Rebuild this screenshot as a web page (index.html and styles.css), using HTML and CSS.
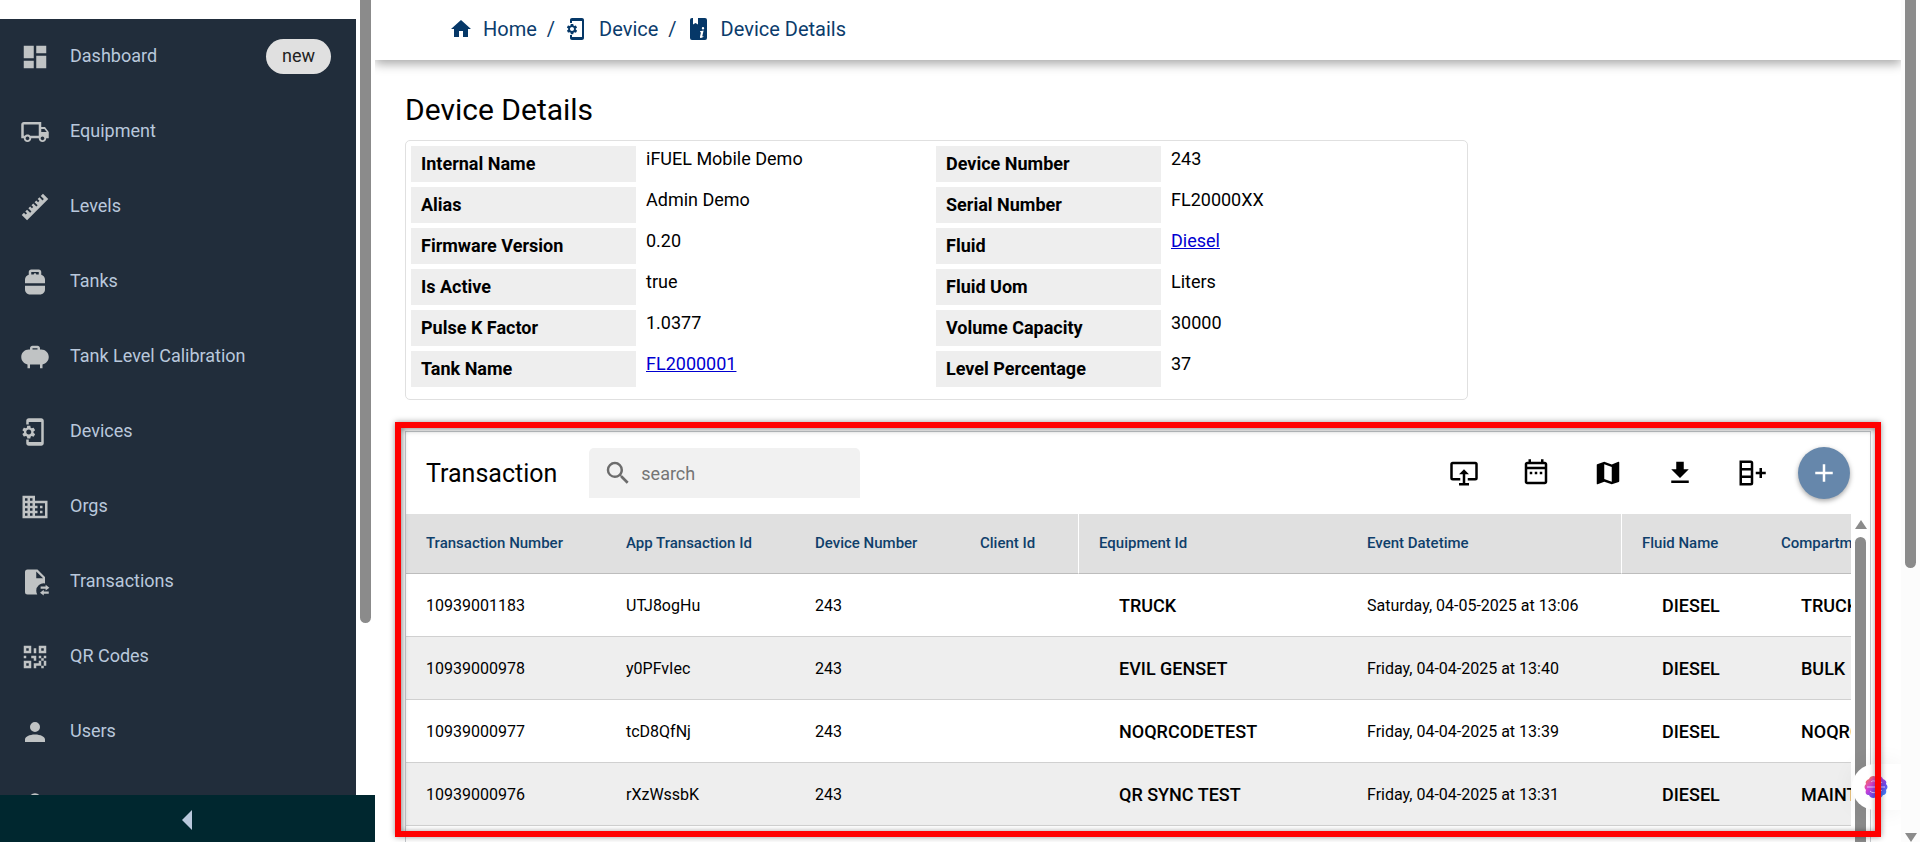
FILE: index.html
```html
<!DOCTYPE html>
<html lang="en">
<head>
  <meta charset="UTF-8">
  <meta name="viewport" content="width=device-width, initial-scale=1.0">
  <title>Device Details</title>
  <link rel="stylesheet" href="styles.css">
</head>
<body>
  <aside class="sidebar">
    <div class="sidebar-body">
      <nav class="menu">
        <a class="menu-item" href="#">
          <svg viewBox="0 0 24 24"><path d="M13,3V9H21V3M13,21H21V11H13M3,21H11V15H3M3,13H11V3H3V13Z"/></svg>
          <span class="menu-label">Dashboard</span>
          <span class="chip">new</span>
        </a>
        <a class="menu-item" href="#">
          <svg viewBox="0 0 24 24"><path d="M18 18.5C18.83 18.5 19.5 17.83 19.5 17C19.5 16.17 18.83 15.5 18 15.5C17.17 15.5 16.5 16.17 16.5 17C16.5 17.83 17.17 18.5 18 18.5M19.5 9.5H17V12H21.46L19.5 9.5M6 18.5C6.83 18.5 7.5 17.83 7.5 17C7.5 16.17 6.83 15.5 6 15.5C5.17 15.5 4.5 16.17 4.5 17C4.5 17.83 5.17 18.5 6 18.5M20 8L23 12V17H21C21 18.66 19.66 20 18 20C16.34 20 15 18.66 15 17H9C9 18.66 7.66 20 6 20C4.34 20 3 18.66 3 17H1V6C1 4.89 1.89 4 3 4H17V8H20M3 6V15H3.76C4.31 14.39 5.11 14 6 14C6.89 14 7.69 14.39 8.24 15H15V6H3Z"/></svg>
          <span class="menu-label">Equipment</span>
        </a>
        <a class="menu-item" href="#">
          <svg viewBox="0 0 24 24"><path d="M1.39,18.36L3.16,16.6L4.58,18L5.64,16.95L4.22,15.54L5.64,14.12L8.11,16.6L9.17,15.54L6.7,13.06L8.11,11.65L9.53,13.06L10.59,12L9.17,10.59L10.59,9.17L13.06,11.65L14.12,10.59L11.65,8.11L13.06,6.7L14.47,8.11L15.54,7.05L14.12,5.64L15.54,4.22L18,6.7L19.07,5.64L16.6,3.16L18.36,1.39L22.61,5.64L5.64,22.61L1.39,18.36Z"/></svg>
          <span class="menu-label">Levels</span>
        </a>
        <a class="menu-item" href="#">
          <svg viewBox="0 0 24 24"><path d="M4,15v3c0,2.21,1.79,4,4,4h8c2.21,0,4-1.79,4-4v-3H4z M20,13v-3c0-1.86-1.28-3.41-3-3.86V4c0-1.1-0.9-2-2-2H9C7.9,2,7,2.9,7,4v2.14c-1.72,0.45-3,2-3,3.86v3H20z M9,4h6v2h-2c0-.55-.45-1-1-1s-1 .45-1 1H9V4z"/></svg>
          <span class="menu-label">Tanks</span>
        </a>
        <a class="menu-item" href="#">
          <svg viewBox="0 0 24 24"><path d="M17,6h-1V5c0-1.1-0.9-2-2-2h-4C8.9,3,8,3.9,8,5v1H7c-3.31,0-6,2.69-6,6c0,2.97,2.16,5.43,5,5.91V21h2v-3h8v3h2v-3.09c2.84-0.48,5-2.94,5-5.91C23,8.69,20.31,6,17,6z M10,5h4v1h-4V5z"/></svg>
          <span class="menu-label">Tank Level Calibration</span>
        </a>
        <a class="menu-item" href="#">
          <svg viewBox="1 0 24 24"><path d="M11.8 12.5v-1l1.1-.8c.1-.1.1-.2.1-.3l-1-1.7c-.1-.1-.2-.2-.3-.1l-1.3.4c-.3-.2-.6-.4-.9-.5l-.2-1.3c0-.1-.1-.2-.3-.2H7c-.1 0-.2.1-.3.2l-.2 1.3c-.3.1-.6.3-.9.5l-1.3-.5c-.1 0-.2 0-.3.1l-1 1.7c-.1.2 0 .3.1.4l1.1.9v1l-1.1.8c-.1.1-.2.3-.1.4l1 1.7c.1.1.2.2.3.1l1.4-.4c.3.2.6.4.9.5l.2 1.3c-.1.1.1.2.2.2h2c.1 0 .2-.1.3-.2l.2-1.3c.3-.1.6-.3.9-.5l1.3.5c.1 0 .2 0 .3-.1l1-1.7c.1-.2 0-.3-.1-.4l-1.1-.9zM8 14c-1.1 0-2-.9-2-2s.9-2 2-2 2 .9 2 2-.9 2-2 2zM18 1H8c-1.1 0-2 .9-2 2v3h2V4h10v16H8v-2H6v3c0 1.1.9 2 2 2h10c1.1 0 2-.9 2-2V3c0-1.1-.9-2-2-2z"/></svg>
          <span class="menu-label">Devices</span>
        </a>
        <a class="menu-item" href="#">
          <svg viewBox="0 0 24 24"><path d="M18,15H16V17H18M18,11H16V13H18M20,19H12V17H14V15H12V13H14V11H12V9H20M10,7H8V5H10M10,11H8V9H10M10,15H8V13H10M10,19H8V17H10M6,7H4V5H6M6,11H4V9H6M6,15H4V13H6M6,19H4V17H6M12,7V3H2V21H22V7H12Z"/></svg>
          <span class="menu-label">Orgs</span>
        </a>
        <a class="menu-item" href="#">
          <svg viewBox="0 0 24 24"><path d="M14 2H6a2 2 0 0 0-2 2v16a2 2 0 0 0 2 2h7.8c-.5-.9-.8-1.9-.8-3a6 6 0 0 1 7-5.9V8l-6-6M13 9V3.5L18.5 9H13M20.5 14.2v1.4h-4v1.8h4v1.4l3-2.3zM19 18.2v1.4h4v1.8h-4v1.4l-3-2.3z"/></svg>
          <span class="menu-label">Transactions</span>
        </a>
        <a class="menu-item" href="#">
          <svg viewBox="0 0 24 24"><path d="M3,11H5V13H3V11M11,5H13V9H11V5M9,11H13V15H11V13H9V11M15,11H17V13H19V11H21V13H19V15H21V19H19V21H17V19H13V21H11V17H15V15H17V13H15V11M19,19V15H17V19H19M15,3H21V9H15V3M17,5V7H19V5H17M3,3H9V9H3V3M5,5V7H7V5H5M3,15H9V21H3V15M5,17V19H7V17H5Z"/></svg>
          <span class="menu-label">QR Codes</span>
        </a>
        <a class="menu-item" href="#">
          <svg viewBox="0 0 24 24"><path d="M12,4A4,4 0 0,1 16,8A4,4 0 0,1 12,12A4,4 0 0,1 8,8A4,4 0 0,1 12,4M12,14C16.42,14 20,15.79 20,18V20H4V18C4,15.79 7.58,14 12,14Z"/></svg>
          <span class="menu-label">Users</span>
        </a>
        <a class="menu-item" href="#" aria-label="Account">
          <svg viewBox="0 0 24 24"><circle cx="12" cy="6" r="5"/></svg>
        </a>
      </nav>
      <div class="scrollbar scrollbar-menu"><div class="thumb"></div></div>
    </div>
    <button class="collapse" aria-label="Collapse menu">
      <svg viewBox="0 0 10 20"><path d="M10 0V20L0 10z"/></svg>
    </button>
  </aside>

  <div class="page">
    <main class="main">
      <nav class="breadcrumb">
        <a href="#">
          <svg viewBox="0 0 24 24"><path d="M10,20V14H14V20H19V12H22L12,3L2,12H5V20H10Z"/></svg>
          Home
        </a>
        <span>/</span>
        <a href="#">
          <svg viewBox="1 0 24 24"><path d="M11.8 12.5v-1l1.1-.8c.1-.1.1-.2.1-.3l-1-1.7c-.1-.1-.2-.2-.3-.1l-1.3.4c-.3-.2-.6-.4-.9-.5l-.2-1.3c0-.1-.1-.2-.3-.2H7c-.1 0-.2.1-.3.2l-.2 1.3c-.3.1-.6.3-.9.5l-1.3-.5c-.1 0-.2 0-.3.1l-1 1.7c-.1.2 0 .3.1.4l1.1.9v1l-1.1.8c-.1.1-.2.3-.1.4l1 1.7c.1.1.2.2.3.1l1.4-.4c.3.2.6.4.9.5l.2 1.3c-.1.1.1.2.2.2h2c.1 0 .2-.1.3-.2l.2-1.3c.3-.1.6-.3.9-.5l1.3.5c.1 0 .2 0 .3-.1l1-1.7c.1-.2 0-.3-.1-.4l-1.1-.9zM8 14c-1.1 0-2-.9-2-2s.9-2 2-2 2 .9 2 2-.9 2-2 2zM18 1H8c-1.1 0-2 .9-2 2v3h2V4h10v16H8v-2H6v3c0 1.1.9 2 2 2h10c1.1 0 2-.9 2-2V3c0-1.1-.9-2-2-2z"/></svg>
          Device
        </a>
        <span>/</span>
        <a href="#">
          <svg viewBox="0 0 24 24"><path fill-rule="evenodd" d="M18 1H11v6.500L8.500 6 6 7.500V1H5a2 2 0 0 0-2 2v18a2 2 0 0 0 2 2h13a2 2 0 0 0 2-2V3a2 2 0 0 0-2-2M16 10a1.200 1.200 0 1 1 0 2.400a1.200 1.200 0 0 1 0-2.400M13 14.200l3.600-.6-1.400 5.800 1.100-.5v1l-2.300 1c-1 0-1.200-.7-1-1.500l1-4.200h-1z"/></svg>
          Device Details
        </a>
      </nav>

      <h1>Device Details</h1>
      <dl class="details">
        <dt>Internal Name</dt><dd>iFUEL Mobile Demo</dd>
        <dt>Device Number</dt><dd>243</dd>
        <dt>Alias</dt><dd>Admin Demo</dd>
        <dt>Serial Number</dt><dd>FL20000XX</dd>
        <dt>Firmware Version</dt><dd>0.20</dd>
        <dt>Fluid</dt><dd><a href="#">Diesel</a></dd>
        <dt>Is Active</dt><dd>true</dd>
        <dt>Fluid Uom</dt><dd>Liters</dd>
        <dt>Pulse K Factor</dt><dd>1.0377</dd>
        <dt>Volume Capacity</dt><dd>30000</dd>
        <dt>Tank Name</dt><dd><a href="#">FL2000001</a></dd>
        <dt>Level Percentage</dt><dd>37</dd>
      </dl>

      <section class="card">
        <div class="toolbar">
          <h2>Transaction</h2>
          <label class="search">
            <svg viewBox="0 0 24 24"><path d="M9.5,3A6.5,6.5 0 0,1 16,9.5C16,11.11 15.41,12.59 14.44,13.73L14.71,14H15.5L20.5,19L19,20.5L14,15.5V14.71L13.73,14.44C12.59,15.41 11.11,16 9.5,16A6.5,6.5 0 0,1 3,9.5A6.5,6.5 0 0,1 9.5,3M9.5,5C7,5 5,7 5,9.5C5,12 7,14 9.5,14C12,14 14,12 14,9.5C14,7 12,5 9.5,5Z"/></svg>
            <input type="text" placeholder="search" aria-label="search">
          </label>
          <div class="actions">
            <button aria-label="Present">
              <svg viewBox="0 0 24 24"><path d="M21 3H3a2 2 0 0 0-2 2v11a2 2 0 0 0 2 2h6v-2H3V5h18v11h-6v2h6a2 2 0 0 0 2-2V5a2 2 0 0 0-2-2M11 20H8v2h8v-2h-3v-7h3l-4-4-4 4h3z"/></svg>
            </button>
            <button aria-label="Dates">
              <svg viewBox="0 0 24 24"><path d="M7 11H9V13H7V11M19 3H18V1H16V3H8V1H6V3H5C3.89 3 3 3.9 3 5V19C3 20.1 3.9 21 5 21H19C20.1 21 21 20.1 21 19V5C21 3.9 20.1 3 19 3M19 5V7H5V5H19M5 19V9H19V19H5M11 11H13V13H11M15 11H17V13H15"/></svg>
            </button>
            <button aria-label="Map">
              <svg viewBox="0 0 24 24"><path d="M15,19L9,16.89V5L15,7.11M20.5,3C20.44,3 20.39,3 20.34,3L15,5.1L9,3L3.36,4.9C3.15,4.97 3,5.15 3,5.38V20.5A0.5,0.5 0 0,0 3.5,21C3.55,21 3.61,21 3.66,20.97L9,18.9L15,21L20.64,19.1C20.85,19 21,18.85 21,18.62V3.5A0.5,0.5 0 0,0 20.5,3Z"/></svg>
            </button>
            <button aria-label="Download">
              <svg viewBox="0 0 24 24"><path d="M5,20H19V18H5M19,9H15V3H9V9H5L12,16L19,9Z"/></svg>
            </button>
            <button aria-label="Add column">
              <svg viewBox="0 0 24 24"><path d="M11 2a2 2 0 0 1 2 2v16a2 2 0 0 1-2 2H2V2h9M4 10v4h7v-4H4m0 6v4h7v-4H4M4 4v4h7V4H4m11 7h3V8h2v3h3v2h-3v3h-2v-3h-3v-2Z"/></svg>
            </button>
            <button class="fab" aria-label="Add">
              <svg viewBox="0 0 24 24"><path d="M19,13H13V19H11V13H5V11H11V5H13V11H19V13Z"/></svg>
            </button>
          </div>
        </div>
        <div class="table-area">
          <div class="table-wrap">
            <table>
              <colgroup>
                <col class="col-number"><col class="col-app"><col class="col-device"><col class="col-client">
                <col class="col-equipment"><col class="col-date"><col class="col-fluid"><col class="col-compartment">
              </colgroup>
              <thead>
                <tr>
                  <th>Transaction Number</th>
                  <th>App Transaction Id</th>
                  <th>Device Number</th>
                  <th>Client Id</th>
                  <th class="split">Equipment Id</th>
                  <th>Event Datetime</th>
                  <th class="split">Fluid Name</th>
                  <th>Compartment</th>
                </tr>
              </thead>
              <tbody>
                <tr>
                  <td>10939001183</td><td>UTJ8ogHu</td><td>243</td><td></td>
                  <td class="strong">TRUCK</td><td>Saturday, 04-05-2025 at 13:06</td>
                  <td class="strong">DIESEL</td><td class="strong">TRUCK</td>
                </tr>
                <tr>
                  <td>10939000978</td><td>y0PFvIec</td><td>243</td><td></td>
                  <td class="strong">EVIL GENSET</td><td>Friday, 04-04-2025 at 13:40</td>
                  <td class="strong">DIESEL</td><td class="strong">BULK</td>
                </tr>
                <tr>
                  <td>10939000977</td><td>tcD8QfNj</td><td>243</td><td></td>
                  <td class="strong">NOQRCODETEST</td><td>Friday, 04-04-2025 at 13:39</td>
                  <td class="strong">DIESEL</td><td class="strong">NOQRCODETEST</td>
                </tr>
                <tr>
                  <td>10939000976</td><td>rXzWssbK</td><td>243</td><td></td>
                  <td class="strong">QR SYNC TEST</td><td>Friday, 04-04-2025 at 13:31</td>
                  <td class="strong">DIESEL</td><td class="strong">MAINTANK</td>
                </tr>
              </tbody>
            </table>
          </div>
          <div class="scrollbar scrollbar-table">
            <svg class="arrow" viewBox="0 0 12 9"><path d="M6 0L12 9H0z"/></svg>
            <div class="thumb"></div>
          </div>
        </div>
        <button class="assistant" aria-label="Assistant">
          <svg viewBox="0 0 24 24">
            <defs>
              <linearGradient id="brain" x1="0" y1="0" x2="1" y2="1">
                <stop offset="0" stop-color="#ff8a2a"/>
                <stop offset=".35" stop-color="#d63fd0"/>
                <stop offset=".65" stop-color="#6a4df0"/>
                <stop offset="1" stop-color="#2aa8ff"/>
              </linearGradient>
            </defs>
            <path fill="url(#brain)" d="M12 2c2-2 6-1 7 2 3 1 4 3 3 5 2 2 2 4 0 6 1 3-1 5-3 5-1 3-5 4-7 2-2 2-6 1-7-2-3 0-4-2-3-5-2-2-2-4 0-6C1 7 2 5 5 4c1-3 5-4 7-2z"/>
            <path class="folds" d="M3 12h18M7 7c2-2 4-1 5 0M13 6c2-1 4 0 5 2M6 16c2 2 4 2 6 1M14 17c2 0 3-1 4-2"/>
          </svg>
        </button>
        <div class="highlight"></div>
      </section>
    </main>
    <div class="scrollbar scrollbar-page">
      <div class="thumb"></div>
      <svg class="arrow" viewBox="0 0 12 9"><path d="M0 0H12L6 9z"/></svg>
    </div>
  </div>
</body>
</html>
```
FILE: styles.css
```css
* {
  box-sizing: border-box;
}

body {
  display: flex;
  height: 100vh;
  margin: 0;
  overflow: hidden;
  background: #fff;
  color: #000;
  font-family: Roboto, Arial, sans-serif;
  font-size: 18px;
}

svg {
  display: block;
  flex: none;
  fill: currentColor;
}

button {
  padding: 0;
  border: none;
  background: none;
  color: inherit;
  cursor: pointer;
}

/* sidebar */
.sidebar {
  display: flex;
  flex-direction: column;
  flex: none;
  width: 375px;
}

.sidebar-body {
  display: flex;
  flex: 1;
  min-height: 0;
}

.menu {
  flex: 1;
  margin-top: 19px;
  overflow: hidden;
  background: #212d3b;
}

.menu-item {
  display: flex;
  align-items: center;
  height: 75px;
  padding: 0 25px 0 20px;
  color: #b9c8dc;
  text-decoration: none;
}

.menu-item svg {
  width: 30px;
  height: 30px;
  margin-right: 20px;
  color: #c0c3c4;
}

.menu-label {
  padding-bottom: 2px;
}

.chip {
  margin-left: auto;
  padding: 0 16px 1px;
  border-radius: 18px;
  background: #e0e0e0;
  color: #222;
  line-height: 34px;
}

.collapse {
  display: flex;
  align-items: center;
  justify-content: center;
  height: 47px;
  padding: 3px 2px 0 0;
  background: #00272f;
  color: #b9c8dc;
}

.collapse svg {
  width: 10px;
  height: 20px;
}

/* scrollbars */
.scrollbar {
  display: flex;
  flex-direction: column;
  flex: none;
  width: 19px;
  padding: 0 4px;
}

.scrollbar .thumb {
  width: 11px;
  border-radius: 6px;
  background: #8b8b8b;
}

.scrollbar .arrow {
  width: 12px;
  height: 9px;
  color: #8b8b8b;
}

.scrollbar-menu .thumb {
  height: 80%;
  max-height: 623px;
  border-radius: 0 0 6px 6px;
}

.scrollbar-page {
  justify-content: space-between;
  background: #fcfcfc;
}

.scrollbar-page .thumb {
  height: 568px;
  border-radius: 0 0 6px 6px;
}

.scrollbar-table {
  gap: 8px;
  padding-top: 6px;
}

.scrollbar-table .thumb {
  flex: 1;
  border-radius: 6px 6px 0 0;
}

/* page */
.page {
  display: flex;
  flex: 1;
  min-width: 0;
}

.main {
  display: flex;
  flex-direction: column;
  flex: 1;
  min-width: 0;
  overflow: hidden;
}

.breadcrumb {
  display: flex;
  align-items: center;
  flex: none;
  gap: 10px;
  height: 60px;
  padding: 0 74px 2px;
  box-shadow: 0 4px 10px rgba(0, 0, 0, 0.34);
  color: #0b3c6c;
  font-size: 20px;
}

.breadcrumb a {
  display: flex;
  align-items: center;
  gap: 10px;
  color: #0b3c6c;
  text-decoration: none;
}

.breadcrumb svg {
  width: 24px;
  height: 24px;
  color: #063868;
}

h1 {
  margin: 30px 30px 10px;
  font-size: 30px;
  font-weight: 400;
  line-height: 40px;
}

.details {
  display: grid;
  grid-template-columns: 225px 300px 225px 300px;
  grid-auto-rows: 36px;
  row-gap: 5px;
  align-self: flex-start;
  margin: 0 30px;
  padding: 5px 6px 12px 5px;
  border: 1px solid #e0e0e0;
  border-radius: 5px;
}

.details dt {
  padding: 0 10px;
  background: #eee;
  font-weight: 700;
  line-height: 36px;
}

.details dd {
  margin: 0;
  padding: 0 10px;
  line-height: 26px;
}

.details a {
  color: #0000d0;
}

/* transactions */
.card {
  position: relative;
  display: flex;
  flex-direction: column;
  flex: 1;
  min-height: 0;
  margin: 31px 30px 0;
  border: 1px solid #c4c8cc;
  border-bottom: none;
}

.toolbar {
  display: flex;
  align-items: center;
  flex: none;
  height: 82px;
  padding: 0 20px;
}

h2 {
  margin: 0 32px 0 0;
  font-size: 25px;
  font-weight: 400;
}

.search {
  display: flex;
  align-items: center;
  gap: 8px;
  width: 271px;
  height: 50px;
  padding: 0 14px;
  border-radius: 5px 5px 0 0;
  background: #f1f1f1;
}

.search svg {
  width: 30px;
  height: 30px;
  color: #6c6c6c;
}

.search input {
  flex: 1;
  min-width: 0;
  padding: 0;
  border: none;
  outline: none;
  background: none;
  font: inherit;
}

.search input::placeholder {
  color: #757575;
}

.actions {
  display: flex;
  gap: 20px;
  margin-left: auto;
}

.actions button {
  display: flex;
  align-items: center;
  justify-content: center;
  width: 52px;
  height: 52px;
}

.actions svg {
  width: 30px;
  height: 30px;
}

.actions .fab {
  border-radius: 50%;
  background: #6687ab;
  box-shadow: 0 2px 5px rgba(0, 0, 0, 0.35);
  color: #fff;
}

.table-area {
  display: flex;
  flex: 1;
  min-height: 0;
}

.table-wrap {
  flex: 1;
  min-width: 0;
  overflow: hidden;
}

table {
  width: 1554px;
  border-collapse: separate;
  border-spacing: 0;
  table-layout: fixed;
}

.col-number { width: 199px; }
.col-app { width: 189px; }
.col-device { width: 165px; }
.col-client { width: 119px; }
.col-equipment { width: 268px; }
.col-date { width: 275px; }
.col-fluid { width: 139px; }
.col-compartment { width: 200px; }

th,
td {
  padding: 0 0 0 21px;
  text-align: left;
  white-space: nowrap;
}

th:first-child,
td:first-child {
  padding-left: 20px;
}

th {
  height: 60px;
  padding-bottom: 2px;
  border-bottom: 1px solid #bdbdbd;
  background: #e0e0e0;
  color: #0f3f6b;
  font-size: 15px;
  font-weight: 500;
}

th.split {
  padding-left: 20px;
  border-left: 1px solid #fff;
}

td {
  height: 63px;
  border-bottom: 1px solid #d0d0d0;
  font-size: 16px;
}

td.strong {
  padding-left: 41px;
  font-size: 18px;
  font-weight: 500;
}

tbody tr:nth-child(even) td {
  background: #eee;
}

/* overlays */
.assistant {
  position: absolute;
  right: -31px;
  bottom: 32px;
  display: flex;
  align-items: center;
  width: 49px;
  height: 46px;
  padding-left: 12px;
  border-radius: 23px 0 0 23px;
  background: #fff;
  box-shadow: 0 0 24px rgba(0, 0, 0, 0.06);
}

.assistant svg {
  width: 24px;
  height: 24px;
}

.assistant .folds {
  fill: none;
  stroke: #e6c8ff;
  stroke-width: 1;
}

.highlight {
  position: absolute;
  inset: -10px -11px 5px;
  border: 6px solid #f00;
  box-shadow: 0 0 6px rgba(0, 0, 0, 0.4), inset 1px 1px 6px rgba(0, 0, 0, 0.5);
  pointer-events: none;
}
```
